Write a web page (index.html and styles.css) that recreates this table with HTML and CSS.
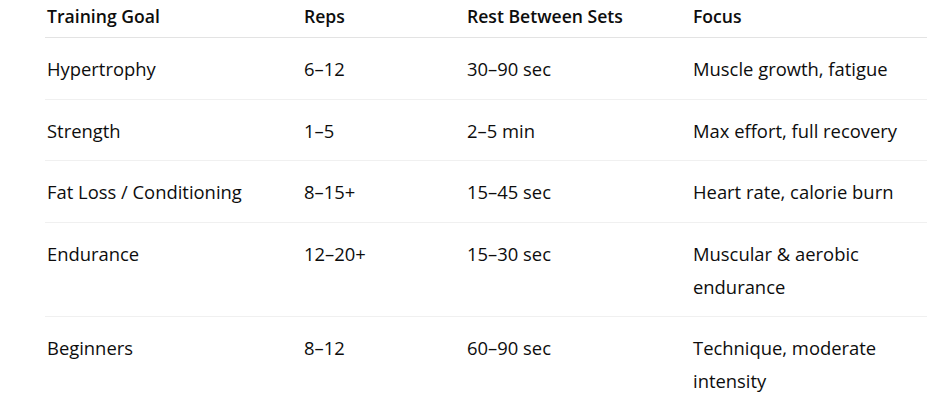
FILE: index.html
```html
<!DOCTYPE html>
<html lang="en">
<head>
<meta charset="utf-8">
<title>Training Goals</title>
<link rel="stylesheet" href="styles.css">
</head>
<body>
<table class="goals">
  <colgroup>
    <col class="c1"><col class="c2"><col class="c3"><col class="c4">
  </colgroup>
  <thead>
    <tr><th>Training Goal</th><th>Reps</th><th>Rest Between Sets</th><th>Focus</th></tr>
  </thead>
  <tbody>
    <tr><td>Hypertrophy</td><td>6–12</td><td>30–90 sec</td><td>Muscle growth, fatigue</td></tr>
    <tr><td>Strength</td><td>1–5</td><td>2–5 min</td><td>Max effort, full recovery</td></tr>
    <tr><td>Fat Loss / Conditioning</td><td>8–15+</td><td>15–45 sec</td><td>Heart rate, calorie burn</td></tr>
    <tr><td>Endurance</td><td>12–20+</td><td>15–30 sec</td><td>Muscular &amp; aerobic endurance</td></tr>
    <tr><td>Beginners</td><td>8–12</td><td>60–90 sec</td><td>Technique, moderate intensity</td></tr>
  </tbody>
</table>
</body>
</html>
```
FILE: styles.css
```css
html, body {
  margin: 0;
  padding: 0;
  background: #ffffff;
}
body {
  font-family: "Open Sans", "Noto Sans", "Liberation Sans", sans-serif;
  font-size: 18.4px;
  color: #0d0d0d;
}
.goals {
  margin-left: 45px;
  width: 882px;
  border-collapse: collapse;
  table-layout: fixed;
}
.c1 { width: 257px; }
.c2 { width: 163px; }
.c3 { width: 226px; }
.c4 { width: 236px; }
.goals th {
  text-align: left;
  font-size: 17.6px;
  font-weight: 600;
  line-height: 33px;
  padding: 0 20px 4px 2px;
  border-bottom: 1px solid #e3e3e3;
}
.goals td {
  vertical-align: top;
  line-height: 33px;
  padding: 14px 20px 13.5px 2px;
  border-bottom: 1px solid #f0f0f0;
}
```
